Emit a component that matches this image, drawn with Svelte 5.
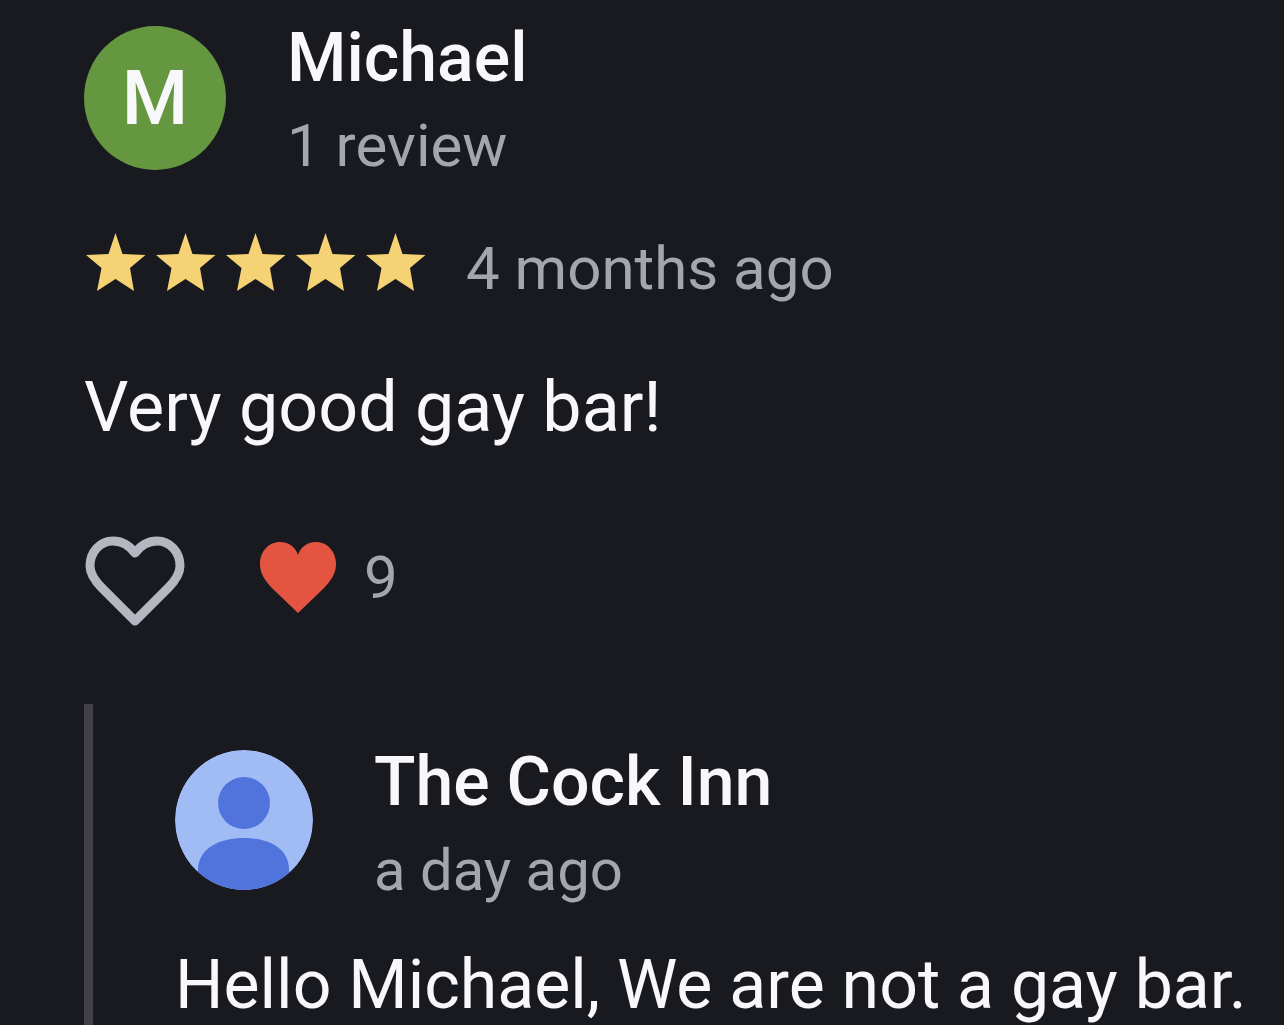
<script>
  const stars = [1, 2, 3, 4, 5];
</script>

<main>
  <article>
    <header>
      <div class="avatar letter">M</div>
      <div class="who">
        <h1>Michael</h1>
        <p class="meta">1 review</p>
      </div>
    </header>

    <div class="rating">
      <div class="stars" role="img" aria-label="5 out of 5 stars">
        {#each stars as star (star)}
          <svg viewBox="0 0 60 58"><path d="M29.500 0L36.500 21L59.500 22L44 35L48 58L29.500 46L11 58L15.500 35L0 22L22.500 21Z" /></svg>
        {/each}
      </div>
      <span class="meta">4 months ago</span>
    </div>

    <p class="body">Very good gay bar!</p>

    <div class="reactions">
      <button class="like" aria-label="Like">
        <svg viewBox="0 0 100 92"><path d="M51 85L18 52C9 43 6 37 6 30C6 16 16 5 29 5C38 5 45 9 51 17C57 9 64 5 73 5C86 5 96 16 96 30C96 37 93 43 84 52Z" /></svg>
      </button>
      <button class="count" aria-label="9 likes">
        <svg viewBox="0 0 76 72"><path d="M38 71L14 48C4 38 0 31 0 22C0 9 9 0 20 0C28 0 35 4 38 13C41 4 48 0 56 0C67 0 76 9 76 22C76 31 72 38 62 48Z" /></svg>
        <span class="meta">9</span>
      </button>
    </div>

    <section class="reply">
      <header>
        <svg class="avatar" viewBox="0 0 138 140" aria-hidden="true">
          <defs><clipPath id="disc"><ellipse cx="69" cy="70" rx="69" ry="70" /></clipPath></defs>
          <g clip-path="url(#disc)">
            <rect width="138" height="140" fill="#a1bbf5" />
            <circle cx="69" cy="53" r="26" fill="#5073dc" />
            <path d="M23 145V120C23 98 45 88 69 88S114 98 114 120V145Z" fill="#5073dc" />
          </g>
        </svg>
        <div class="who">
          <h2>The Cock Inn</h2>
          <p class="meta">a day ago</p>
        </div>
      </header>
      <p class="body">Hello Michael, We are not a gay bar.</p>
    </section>
  </article>
</main>

<style>
  :global(body) { margin: 0; background: #181a1f; }
  main { color: #f8f8fa; font-family: Roboto, "Liberation Sans", sans-serif; padding: 26px 32px 0 84px; }
  h1, h2, p { margin: 0; }
  header { display: flex; gap: 61px; }
  h1, h2 { font-size: 68px; line-height: 64px; font-weight: 500; }
  .meta { color: #a5a5ae; font-size: 60px; line-height: 72px; }
  .who .meta { padding-top: 20px; }
  .avatar { flex: none; width: 142px; height: 144px; border-radius: 50%; }
  .letter { display: flex; align-items: center; justify-content: center; background: #659640; font-size: 76px; font-weight: 500; }
  .rating { display: flex; align-items: flex-start; gap: 40px; margin-top: 51px; }
  .stars { display: flex; gap: 10px; padding-left: 2px; }
  .stars svg { display: block; width: 60px; height: 58px; fill: #f5d274; }
  .body { font-size: 70px; line-height: 84px; white-space: nowrap; }
  article > .body { margin-top: 60px; }
  button { display: flex; align-items: center; margin: 0; padding: 0; border: 0; background: none; font: inherit; cursor: pointer; }
  .reactions { display: flex; align-items: flex-start; gap: 76px; margin-top: 87px; }
  .like svg { width: 100px; height: 92px; overflow: visible; fill: none; stroke: #b4b7c0; stroke-width: 9; stroke-linejoin: round; }
  .count { gap: 28px; padding-top: 6px; }
  .count svg { width: 76px; height: 72px; fill: #e35540; }
  .reply { margin-top: 76px; border-left: 9px solid #414046; padding: 46px 0 24px 82px; }
  .reply .avatar { width: 138px; height: 140px; }
  .reply .meta { font-size: 58px; }
  .reply .body { margin-top: 41px; font-size: 68px; line-height: 76px; }
</style>
